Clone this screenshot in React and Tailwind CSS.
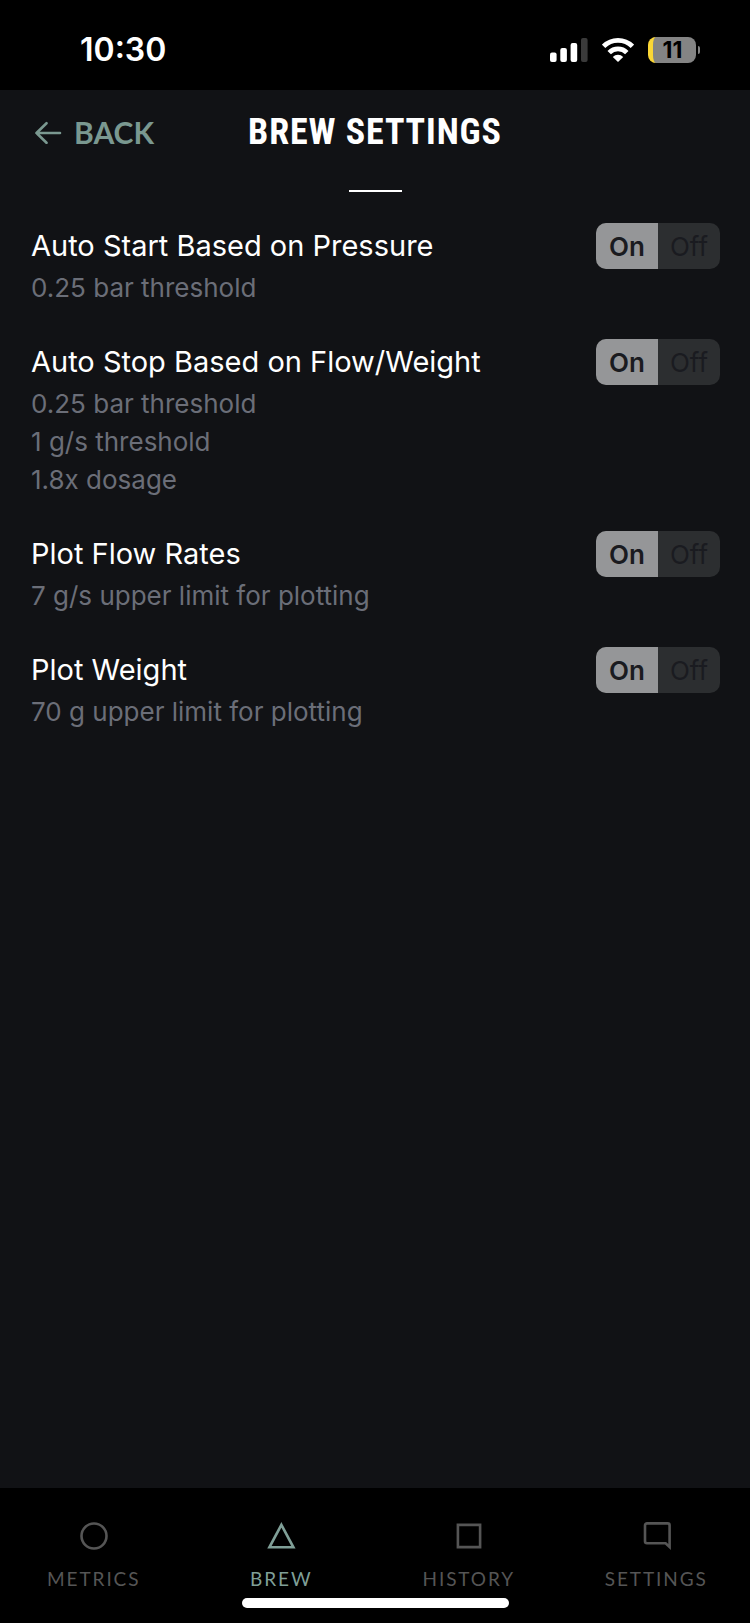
import { useState } from "react";

const SETTINGS = [
  {
    id: "auto-start",
    title: "Auto Start Based on Pressure",
    details: ["0.25 bar threshold"],
  },
  {
    id: "auto-stop",
    title: "Auto Stop Based on Flow/Weight",
    details: ["0.25 bar threshold", "1 g/s threshold", "1.8x dosage"],
  },
  {
    id: "plot-flow",
    title: "Plot Flow Rates",
    details: ["7 g/s upper limit for plotting"],
  },
  {
    id: "plot-weight",
    title: "Plot Weight",
    details: ["70 g upper limit for plotting"],
  },
];

const TABS = [
  { label: "METRICS", icon: <circle cx="15" cy="15" r="12.5" /> },
  { label: "BREW", icon: <path d="M15.4 3.8 27.4 26.3H3.4Z" /> },
  { label: "HISTORY", icon: <path d="M3.9 3.9h22.2v22.2H3.9Z" /> },
  {
    label: "SETTINGS",
    icon: <path d="M28.6 26V4.4a2 2 0 0 0-2-2H6a2 2 0 0 0-2 2v15.8a2 2 0 0 0 2 2h18.6Z" />,
  },
];

const StatusBar = () => (
  <div className="flex h-[90px] items-center justify-between bg-black pl-20 pr-[50px] pt-2.5">
    <span className="text-[32px] font-semibold leading-10">10:30</span>

    <div className="flex items-center gap-3.5">
      <svg width="38" height="24" viewBox="0 0 38 24" aria-hidden="true">
        <rect x="0" y="14.5" width="6.6" height="9.5" rx="2" fill="#fff" />
        <rect x="10.3" y="10" width="6.6" height="14" rx="2" fill="#fff" />
        <rect x="20.6" y="5" width="6.6" height="19" rx="2" fill="#fff" />
        <rect x="31" y="0" width="6.6" height="24" rx="2" fill="#3a3a3a" />
      </svg>

      <svg width="32" height="24" viewBox="0 0 32 24" aria-hidden="true">
        <g fill="none" stroke="#fff" strokeWidth="4.8">
          <path d="M1.6 8.4a20.4 20.4 0 0 1 28.8 0" />
          <path d="M7.2 14.6a12.4 12.4 0 0 1 17.6 0" />
        </g>
        <path d="M16 24l-5.2-5.1a7.4 7.4 0 0 1 10.4 0Z" fill="#fff" />
      </svg>

      <div className="flex items-center gap-0.5">
        <div className="flex h-[26px] w-12 items-center justify-center rounded-lg border-l-[5px] border-[#fbd735] bg-[#848484] pr-1 text-[23px] font-bold leading-none text-black">
          11
        </div>
        <div className="h-2 w-0.5 rounded-r-full bg-[#848484]" />
      </div>
    </div>
  </div>
);

const Toggle = ({ id, value, onChange }) => (
  <div
    role="radiogroup"
    aria-labelledby={id}
    className="flex h-[46px] shrink-0 overflow-hidden rounded-[10px] bg-[#2c2e30] text-[26px]"
  >
    {["On", "Off"].map((option) => (
      <label
        key={option}
        className="relative flex w-[62px] cursor-pointer items-center justify-center text-[#1a1b20] has-checked:bg-[#959698] has-checked:font-semibold"
      >
        <input
          type="radio"
          name={id}
          className="absolute inset-0 cursor-pointer appearance-none"
          checked={value === option}
          onChange={() => onChange(option)}
        />
        {option}
      </label>
    ))}
  </div>
);

const App = () => {
  const [values, setValues] = useState({});
  const [tab, setTab] = useState("BREW");

  return (
    <div className="flex min-h-screen flex-col bg-[#111215] font-['Inter',sans-serif] text-white">
      <StatusBar />

      <header className="flex flex-col items-center">
        <div className="grid h-[84px] w-full grid-cols-[1fr_auto_1fr] items-center px-[34px]">
          <button
            type="button"
            className="flex items-center gap-3 justify-self-start font-['Lato',sans-serif] text-[30px] font-bold text-[#7a9890]"
          >
            <svg
              width="28"
              height="24"
              viewBox="0 0 28 24"
              fill="none"
              stroke="currentColor"
              strokeWidth="2.6"
              strokeLinecap="round"
              strokeLinejoin="round"
              aria-hidden="true"
            >
              <path d="M26 13H2.5M12.5 3.2 2.5 13l10 9.8" />
            </svg>
            BACK
          </button>
          <h1 className="font-['Roboto_Condensed','Roboto',sans-serif] text-4xl font-bold tracking-wide">
            BREW SETTINGS
          </h1>
        </div>
        <div className="mt-4 h-0.5 w-[53px] bg-white" />
      </header>

      <main className="mt-[31px] flex flex-1 flex-col gap-8 pl-[31px] pr-[30px]">
        {SETTINGS.map((s) => (
          <section key={s.id} className="flex items-start justify-between">
            <div>
              <h2 id={s.id} className="text-[29px] leading-[46px]">
                {s.title}
              </h2>
              {s.details.map((d) => (
                <p key={d} className="text-[26px] leading-[38px] text-[#6b6e78]">
                  {d}
                </p>
              ))}
            </div>
            <Toggle
              id={s.id}
              value={values[s.id] ?? "On"}
              onChange={(v) => setValues((prev) => ({ ...prev, [s.id]: v }))}
            />
          </section>
        ))}
      </main>

      <nav className="flex h-[135px] flex-col items-center bg-black pt-[33px]">
        <div className="grid w-full grid-cols-4">
          {TABS.map(({ label, icon }) => (
            <button
              key={label}
              type="button"
              onClick={() => setTab(label)}
              className={`flex flex-col items-center gap-3.5 font-['Lato',sans-serif] text-[19px] leading-7 tracking-widest ${
                tab === label ? "text-[#7f9f97]" : "text-[#555555]"
              }`}
            >
              <svg
                width="30"
                height="30"
                viewBox="0 0 30 30"
                fill="none"
                stroke="currentColor"
                strokeWidth="2.6"
                aria-hidden="true"
              >
                {icon}
              </svg>
              {label}
            </button>
          ))}
        </div>
        <div className="mt-[5px] h-2.5 w-[267px] rounded-full bg-white" />
      </nav>
    </div>
  );
};

export default App;
